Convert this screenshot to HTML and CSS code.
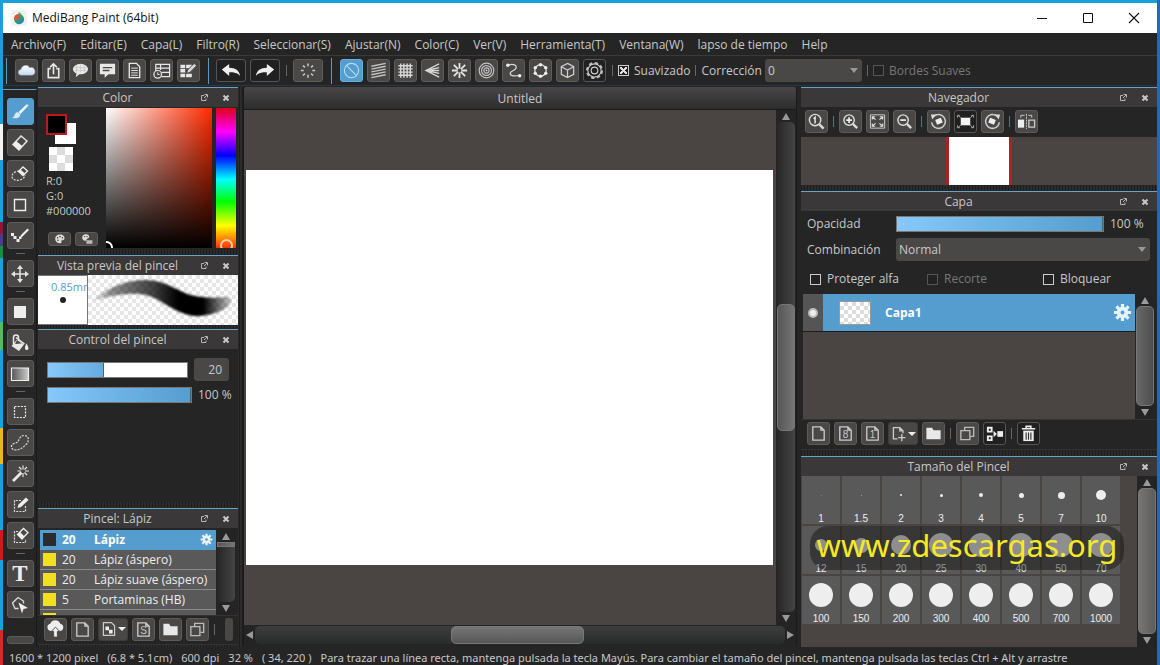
FILE: index.html
```html
<!DOCTYPE html>
<html lang="es">
<head>
<meta charset="utf-8">
<meta name="viewport" content="width=device-width, initial-scale=1">
<title>MediBang Paint (64bit)</title>
<link rel="stylesheet" href="styles.css">
</head>
<body>
<svg class="defs" aria-hidden="true">
  <defs>
    <linearGradient id="grad-grey"><stop offset="0" stop-color="#555"/><stop offset="1" stop-color="#ccc"/></linearGradient>
    <linearGradient id="stroke-grad"><stop offset="0" stop-color="#000" stop-opacity="0.05"/><stop offset="0.15" stop-color="#000" stop-opacity="0.45"/><stop offset="0.45" stop-color="#000" stop-opacity="0.75"/><stop offset="0.62" stop-color="#000" stop-opacity="1"/><stop offset="0.8" stop-color="#000" stop-opacity="1"/><stop offset="1" stop-color="#000" stop-opacity="0.2"/></linearGradient>
    <linearGradient id="cloud-grad" x2="0" y2="1"><stop offset="0" stop-color="#fff"/><stop offset="1" stop-color="#c3d9f2"/></linearGradient>
  </defs>
  <symbol id="float" viewBox="0 0 8 8"><path d="M4 1.500H1.500v5h4.500V4.500M4.500 .5h3v3M7 1 4 4" fill="none" stroke="#b4b4b4"/></symbol>
  <symbol id="close" viewBox="0 0 8 8"><path d="M1.500 1.500l5 5M6.500 1.500l-5 5" stroke="#c8c8c8" stroke-width="2"/></symbol>
  <symbol id="cloud" viewBox="0 0 20 20"><path d="M4.500 15a3 3 0 0 1-.3-6A5 5 0 0 1 13.500 7a4 4 0 0 1 2.500 8z" fill="url(#cloud-grad)" stroke="#7d93ad" stroke-width=".6"/></symbol>
  <symbol id="share" viewBox="0 0 20 20"><path d="M7 8H4.500v9.500h11V8H13M10 14V3.500M6.500 6.500 10 3l3.500 3.500" fill="none" stroke="#e8e8e8" stroke-width="1.700"/></symbol>
  <symbol id="speech" viewBox="0 0 20 20"><ellipse cx="10" cy="8.500" rx="8" ry="5.500" fill="#e8e8e8"/><path d="M6 12l-1 5 5-4z" fill="#e8e8e8"/><path d="M6 5v7M10 4v8M14 5v7M4 7h12M4 10h12" stroke="#bbb" stroke-width=".6"/></symbol>
  <symbol id="comment" viewBox="0 0 20 20"><path d="M2 3h16v11h-7l-4 3.500V14H2z" fill="#e8e8e8"/><path d="M5 7h10M5 10h7" stroke="#4a4747" stroke-width="1.400"/></symbol>
  <symbol id="page" viewBox="0 0 20 20"><path d="M4.500 2.500h7.500l3.500 3.500v11.500h-11z" fill="none" stroke="#e8e8e8" stroke-width="1.400"/><path d="M6.500 7.500h7M6.500 10h7M6.500 12.500h7M6.500 15h7" stroke="#e8e8e8"/></symbol>
  <symbol id="tableclock" viewBox="0 0 20 20"><path d="M4 11V3.500h14.500v13H10M4 7.500h14.500M10 12h8.500M9 3.500v6" fill="none" stroke="#e8e8e8" stroke-width="1.300"/><circle cx="6" cy="14" r="4" fill="#4a4747" stroke="#e8e8e8" stroke-width="1.300"/><path d="M6 12v2.200h2" fill="none" stroke="#e8e8e8"/></symbol>
  <symbol id="gridpen" viewBox="0 0 20 20"><path d="M1.500 4h5v3.500h-5zM7.500 4h6v3.500h-6zM1.500 8.500h5V12h-5zM1.500 13.500h5V17h-5zM7.500 13.500h6V17h-6z" fill="#e8e8e8"/><path d="M8 13l1-3.500 7-7 2.500 2.500-7 7z" fill="#d8d8d8" stroke="#4a4747"/></symbol>
  <symbol id="undo" viewBox="0 0 24 20"><path d="M2 9l8-6v4c7 0 11 3 12 9-3-3.500-7-4-12-4v4z" fill="#eee"/></symbol>
  <symbol id="redo" viewBox="0 0 24 20"><path d="M22 9l-8-6v4C7 7 3 10 2 16c3-3.500 7-4 12-4v4z" fill="#eee"/></symbol>
  <symbol id="spinner" viewBox="0 0 20 20"><g stroke="#c8c8c8" stroke-width="1.600"><path d="M10 2.500v3M10 14.500v3M2.500 10h3M14.500 10h3M4.700 4.700l2 2M13.300 13.300l2 2M15.300 4.700l-2 2M6.700 13.300l-2 2"/></g></symbol>
  <symbol id="none" viewBox="0 0 20 20"><circle cx="10" cy="10" r="7.500" fill="none" stroke="#b5dcf7" stroke-width="1.200"/><path d="M4.700 4.700l10.600 10.600" stroke="#b5dcf7" stroke-width="1.200"/></symbol>
  <symbol id="lines" viewBox="0 0 20 20"><path d="M2.500 5.500l15-3M2.500 8.500l15-3M2.500 11.500l15-3M2.500 14.500l15-3M2.500 17.500l15-3" stroke="#c4c4c4" stroke-width="1.500"/></symbol>
  <symbol id="grid" viewBox="0 0 20 20"><path d="M5 2.500v15M8.300 2.500v15M11.700 2.500v15M15 2.500v15M2.500 5h15M2.500 8.300h15M2.500 11.700h15M2.500 15h15" stroke="#d8d8d8" stroke-width="1.500"/></symbol>
  <symbol id="vanish" viewBox="0 0 20 20"><path d="M17 3 3 10l14 7M17 7 3 10l14 3M3 10h14" fill="none" stroke="#d4d4d4" stroke-width="1.400"/></symbol>
  <symbol id="radial" viewBox="0 0 20 20"><path d="M10 2v6M10 12v6M2 10h6M12 10h6M4 4l4.500 4.500M11.500 11.500 16 16M16 4l-4.500 4.500M8.500 11.500 4 16" stroke="#e4e4e4" stroke-width="1.900"/></symbol>
  <symbol id="rings" viewBox="0 0 20 20"><g fill="none" stroke="#c4c4c4" stroke-width="1.200"><circle cx="10" cy="10" r="7.700"/><circle cx="10" cy="10" r="5.200"/><circle cx="10" cy="10" r="2.700"/></g><circle cx="10" cy="10" r="1" fill="#ccc"/></symbol>
  <symbol id="curve" viewBox="0 0 20 20"><path d="M4 4.500c5-2 11-.5 8 4-2 2.500-6 2-5.500 5 .5 2.500 6 2.500 10 1.500" fill="none" stroke="#d8d8d8" stroke-width="1.300"/><circle cx="4" cy="4.500" r="1.800" fill="#eee"/><circle cx="16.500" cy="15.500" r="1.800" fill="#eee"/></symbol>
  <symbol id="ringdots" viewBox="0 0 20 20"><circle cx="10" cy="10" r="6" fill="none" stroke="#d8d8d8" stroke-width="1.500"/><g fill="#eee"><circle cx="10" cy="4" r="1.800"/><circle cx="10" cy="16" r="1.800"/><circle cx="4.500" cy="7" r="1.800"/><circle cx="15.500" cy="7" r="1.800"/><circle cx="4.500" cy="13" r="1.800"/><circle cx="15.500" cy="13" r="1.800"/></g></symbol>
  <symbol id="cube" viewBox="0 0 20 20"><path d="M10 2.500l6.500 3.500v8L10 17.500 3.500 14V6zM3.500 6l6.500 3.500L16.500 6M10 9.500v8" fill="none" stroke="#d0d0d0" stroke-width="1.300"/></symbol>
  <symbol id="gearline" viewBox="0 0 20 20"><circle cx="10" cy="10" r="8" fill="none" stroke="#bbb" stroke-width="2" stroke-dasharray="3.600 2.680"/><circle cx="10" cy="10" r="7" fill="#202020" stroke="#ccc" stroke-width="1.200"/><circle cx="10" cy="10" r="3.500" fill="none" stroke="#ccc" stroke-width="1.200"/></symbol>
  <symbol id="gear" viewBox="0 0 20 20"><path d="M10 1v18M1 10h18M3.600 3.600l12.800 12.800M16.400 3.600 3.600 16.400" stroke="#e4f3fd" stroke-width="3.400"/><circle cx="10" cy="10" r="6" fill="#e4f3fd"/><circle cx="10" cy="10" r="2" fill="#559ccf"/></symbol>
  <symbol id="brush" viewBox="0 0 20 20"><path d="M9 10l8-7.500 1 1-7.500 8z" fill="#f4f8fb" stroke="#f4f8fb" stroke-width=".8"/><path d="M8.500 10.500l2 2C10 16 6 17 2 16c2-1 2-2 3-4 .7-1.300 2-2 3.500-1.500z" fill="#d5e9f7"/></symbol>
  <symbol id="eraser" viewBox="0 0 20 20"><path d="M3 11.500 11 3l6 5-8 9z" fill="none" stroke="#e6e6e6" stroke-width="1.500"/><path d="M3 11.500l3.200-3.500 6 5L9 17z" fill="#eee"/></symbol>
  <symbol id="erasersel" viewBox="0 0 20 20"><path d="M9 7C5 7 1.500 10 2 13c.5 3 5 4 8 3s5-3 5-5" fill="none" stroke="#ddd" stroke-width="1.200" stroke-dasharray="2 1.300"/><path d="M8.500 7.500 13 3l4.500 4-4.500 4.500z" fill="none" stroke="#eee" stroke-width="1.300"/><path d="M8.500 7.500l2-2 4.500 4-2 2z" fill="#eee"/></symbol>
  <symbol id="square" viewBox="0 0 20 20"><path d="M4.500 4.500h11v11h-11z" fill="none" stroke="#eee" stroke-width="1.400"/></symbol>
  <symbol id="dotpen" viewBox="0 0 20 20"><path d="M10 12l1-3 6.500-6.500 1.500 1.500-6.500 6.500z" fill="#eee"/><path d="M1 7h3v3H1zM3.500 10h3v3h-3zM6.500 13h3v3h-3zM9 10.500h2.500V13H9z" fill="#eee"/></symbol>
  <symbol id="move" viewBox="0 0 20 20"><path d="M10 3v14M3 10h14" stroke="#e4e4e4" stroke-width="1.500"/><path d="M10 1l3 4H7zM10 19l3-4H7zM1 10l4-3v6zM19 10l-4-3v6z" fill="#e4e4e4"/></symbol>
  <symbol id="fill" viewBox="0 0 20 20"><path d="M4 4h12v12H4z" fill="#eee"/></symbol>
  <symbol id="bucket" viewBox="0 0 20 20"><path d="M7 6.500l7 5-5 6.500-7.500-5z" fill="#e8e8e8"/><path d="M3.500 11V4.500a2.500 2.500 0 0 1 5 0V10M6 4.500l8.500 6.500" fill="none" stroke="#e8e8e8" stroke-width="1.500"/><path d="M7 7l4.500 3.500L5 11z" fill="#4a4747"/><path d="M16.500 10.500c3 5 2 6.500 0 6.500s-2-3 0-6.500z" fill="#eee"/></symbol>
  <symbol id="gradient" viewBox="0 0 20 20"><path d="M1.500 4h17v12.500h-17z" fill="url(#grad-grey)" stroke="#eee" stroke-width="1.200"/></symbol>
  <symbol id="select" viewBox="0 0 20 20"><path d="M4.500 4.500h11v11h-11z" fill="none" stroke="#eee" stroke-width="1.200" stroke-dasharray="2 1.200"/></symbol>
  <symbol id="lasso" viewBox="0 0 20 20"><path d="M1.500 14c-.5-4 4-3 6-5s2-6.500 6.500-6.500c5 0 5.500 5.500 2.500 8.500s-6 6-11 6c-2 0-3.700-1-4-3z" fill="none" stroke="#ddd" stroke-width="1.200" stroke-dasharray="2 1.200"/></symbol>
  <symbol id="wand" viewBox="0 0 20 20"><path d="M3 17l8.500-8.500" stroke="#e8e8e8" stroke-width="2.800"/><path d="M13 1.500v4M13 9v4M7.500 7h3.500M15 7h4M9 3l2.500 2.500M17 3l-2.500 2.500M17 11l-2.500-2.500" stroke="#e8e8e8" stroke-width="1.200"/></symbol>
  <symbol id="selpen" viewBox="0 0 20 20"><path d="M11 5.500H4.500v11h11V10" fill="none" stroke="#ddd" stroke-width="1.200" stroke-dasharray="2 1.200"/><path d="M7.500 13l1-3.500 7.500-7 2.500 2.500-7.500 7z" fill="#eee"/></symbol>
  <symbol id="seleraser" viewBox="0 0 20 20"><path d="M8 5.500H4.500v11h11V13" fill="none" stroke="#ddd" stroke-width="1.200" stroke-dasharray="2 1.200"/><path d="M7.500 8.500l6-6L18 6.500l-6 6.500z" fill="#4a4747" stroke="#eee" stroke-width="1.300"/><path d="M7.500 8.500l2.500-2.500 4.500 4.500L12 13z" fill="#eee"/></symbol>
  <symbol id="objsel" viewBox="0 0 20 20"><path d="M8.500 13.500H5L2.500 8 8 2.500 13.500 6v2.500" fill="none" stroke="#ddd" stroke-width="1.300"/><path d="M8.500 7.500l9.500 5.500-4.500 1-1.500 4.500z" fill="#eee"/></symbol>
  <symbol id="palette" viewBox="0 0 20 20"><path d="M10 2.500c5 0 8 3 7.500 6.500-.5 3-3 3-4.500 3-1 0-.5 1.500-.5 3s-1 2-2.500 2C5 17 2 13.500 2 9.500s3-7 8-7z" fill="#ddd"/><g fill="#444"><circle cx="6" cy="8" r="1.300"/><circle cx="10" cy="6" r="1.300"/><circle cx="14" cy="8" r="1.300"/><circle cx="6.500" cy="12" r="1.300"/></g></symbol>
  <symbol id="palettes" viewBox="0 0 20 20"><path d="M8 2c4 0 6 2 5.500 5-.5 2-3 2-4 3 0 2-1 3-2 3-4 0-5.500-3-5.500-5.500S4 2 8 2z" fill="#ddd"/><path d="M9 12h10v6H9z" fill="#bbb"/><circle cx="6" cy="6" r="1.200" fill="#444"/><circle cx="10" cy="6" r="1.200" fill="#444"/></symbol>
  <symbol id="zoom1" viewBox="0 0 20 20"><circle cx="8.500" cy="8.500" r="6" fill="none" stroke="#ddd" stroke-width="1.500"/><path d="M13 13l4.500 4.500" stroke="#ddd" stroke-width="2.500"/><path d="M7 7l1.500-1.500v6.500" fill="none" stroke="#eee" stroke-width="1.500"/></symbol>
  <symbol id="zoomin" viewBox="0 0 20 20"><circle cx="8.500" cy="8.500" r="5.500" fill="none" stroke="#ddd" stroke-width="1.500"/><path d="M12.500 12.500l4.500 4.500" stroke="#ddd" stroke-width="2.500"/><path d="M5.500 8.500h6M8.500 5.500v6" stroke="#eee" stroke-width="1.800"/></symbol>
  <symbol id="zoomout" viewBox="0 0 20 20"><circle cx="8.500" cy="8.500" r="5.500" fill="none" stroke="#ddd" stroke-width="1.500"/><path d="M12.500 12.500l4.500 4.500" stroke="#ddd" stroke-width="2.500"/><path d="M5.500 8.500h6" stroke="#eee" stroke-width="1.800"/></symbol>
  <symbol id="fit" viewBox="0 0 20 20"><path d="M2.500 3h15v14h-15z" fill="none" stroke="#ccc"/><path d="M4.500 8V5h3M12.500 5h3v3M15.500 12v3h-3M7.500 15h-3v-3M5 5.500l3 2.500M15 5.500 12 8M15 14.500 12 12M5 14.500 8 12" fill="none" stroke="#ddd" stroke-width="1.200"/></symbol>
  <symbol id="rotl" viewBox="0 0 20 20"><path d="M5 4.500A7.300 7.300 0 1 1 2.700 11" fill="none" stroke="#ccc" stroke-width="1.600"/><path d="M2 2.500h5.500L3.500 8z" fill="#ddd"/><path d="M6.500 8.500l6-2.500 2 5-6 2.500z" fill="#eee"/></symbol>
  <symbol id="rotr" viewBox="0 0 20 20"><path d="M15 4.500A7.300 7.300 0 1 0 17.300 11" fill="none" stroke="#ccc" stroke-width="1.600"/><path d="M18 2.500h-5.500l4 5.500z" fill="#ddd"/><path d="M13.500 8.500l-6-2.500-2 5 6 2.500z" fill="#eee"/></symbol>
  <symbol id="reset" viewBox="0 0 20 20"><path d="M5 6h10v8H5z" fill="#f4f4f4"/><path d="M2 3.500l3 2.500M18 3.500l-3 2.500M2 16.500l3-2.500M18 16.500l-3-2.500M1.500 6V3.500H4M18.500 6V3.500H16M1.500 14v2.500H4M18.500 14v2.500H16" fill="none" stroke="#aaa"/></symbol>
  <symbol id="flip" viewBox="0 0 20 20"><path d="M1 8h6.500v8.500H1z" fill="#eee"/><path d="M12.500 8.500h6v7.500h-6z" fill="none" stroke="#ccc" stroke-width="1.400"/><path d="M10 2v16" stroke="#ccc" stroke-dasharray="2 1"/><path d="M4 6V3.500h4M12 3.500h3.500V6" fill="none" stroke="#ccc"/></symbol>
  <symbol id="new" viewBox="0 0 20 20"><path d="M4 3h8.500l3.500 3.500V17H4zM12.500 3v3.500H16" fill="none" stroke="#ccc" stroke-width="1.400"/></symbol>
  <symbol id="newplus" viewBox="0 0 20 20"><path d="M8 16H3V2h8l4 4v3M11 2v4h4M13.500 10v9M9 14.500h9" fill="none" stroke="#ccc" stroke-width="1.600"/></symbol>
  <symbol id="newchk" viewBox="0 0 20 20"><path d="M3 2h10l4 4v12H3z" fill="none" stroke="#ccc" stroke-width="1.500"/><path d="M5.500 7h4.500v4h4.500v4.500H10v-4H5.500z" fill="#eee"/></symbol>
  <symbol id="folder" viewBox="0 0 20 20"><path d="M2.500 4h6l1.500 2.500h7.500V16h-15z" fill="#e8e8e8"/></symbol>
  <symbol id="copy" viewBox="0 0 20 20"><path d="M3 7h9.500v9.500H3z" fill="none" stroke="#bbb" stroke-width="1.400"/><path d="M7 7V3.500h9.500V13H13" fill="none" stroke="#bbb" stroke-width="1.400"/></symbol>
  <symbol id="merge" viewBox="0 0 20 20"><path d="M2 3h6v6H2zM2 12h6v6H2z" fill="#eee"/><path d="M4 5h2v2H4zM4 14h2v2H4z" fill="#222"/><path d="M9 7v7l3.500-3.500z" fill="#eee"/><path d="M13 7.500h6v6h-6z" fill="#eee"/></symbol>
  <symbol id="trash" viewBox="0 0 20 20"><path d="M3 5h14M7.500 4.500v-2h5v2" fill="none" stroke="#eee" stroke-width="1.600"/><path d="M4.500 7h11v11h-11z" fill="#eee"/><path d="M7.500 9v7.500M10 9v7.500M12.500 9v7.500" stroke="#333" stroke-width="1.200"/></symbol>
  <symbol id="upload" viewBox="0 0 20 20"><path d="M5 11.500a3.800 3.800 0 0 1-.5-7.500 5.500 5.500 0 0 1 10.500 0 3.800 3.800 0 0 1 0 7.500z" fill="#eee"/><path d="M10 7.500l4.500 4.500H12V18H8v-6H5.500z" fill="#eee" stroke="#4a4747"/></symbol>
</svg>

<div class="window">
  <header class="titlebar">
    <svg class="logo" viewBox="0 0 16 16" aria-hidden="true"><rect width="16" height="16" rx="2" fill="#f3f1ee"/><circle cx="8" cy="9" r="5" fill="#2fa06c"/><path d="M8 4a5 5 0 0 0-5 6l5-1z" fill="#e2532f"/><path d="M8 9l5-1a5 5 0 0 1-8 5z" fill="#2a8f9f"/><path d="M7 2.500c2 0 3 .5 3.500 2C8.500 5 7.500 4 7 2.500z" fill="#48b878"/></svg>
    <h1 class="apptitle">MediBang Paint (64bit)</h1>
    <div class="winbuttons">
      <button aria-label="Minimizar"><svg viewBox="0 0 12 12"><path d="M1 6.500h10" stroke="#111"/></svg></button>
      <button aria-label="Maximizar"><svg viewBox="0 0 12 12"><path d="M1.500 1.500h9v9h-9z" fill="none" stroke="#111"/></svg></button>
      <button aria-label="Cerrar"><svg viewBox="0 0 12 12"><path d="M1 1l10 10M11 1 1 11" stroke="#111" stroke-width="1.100"/></svg></button>
    </div>
  </header>

  <div class="shell">
  <nav class="menubar">
    <button>Archivo(F)</button><button>Editar(E)</button><button>Capa(L)</button><button>Filtro(R)</button><button>Seleccionar(S)</button><button>Ajustar(N)</button><button>Color(C)</button><button>Ver(V)</button><button>Herramienta(T)</button><button>Ventana(W)</button><button>lapso de tiempo</button><button>Help</button>
  </nav>

  <div class="toolbar">
    <div class="group first">
      <button class="ib" aria-label="Nube"><svg><use href="#cloud"/></svg></button>
      <button class="ib" aria-label="Compartir"><svg><use href="#share"/></svg></button>
      <button class="ib" aria-label="Globo"><svg><use href="#speech"/></svg></button>
      <button class="ib" aria-label="Comentario"><svg><use href="#comment"/></svg></button>
      <button class="ib" aria-label="Documento"><svg><use href="#page"/></svg></button>
      <button class="ib" aria-label="Historial"><svg><use href="#tableclock"/></svg></button>
      <button class="ib" aria-label="Editar tabla"><svg><use href="#gridpen"/></svg></button>
    </div>
    <div class="group history">
      <button class="ib wide dark" aria-label="Deshacer"><svg><use href="#undo"/></svg></button>
      <button class="ib wide dark" aria-label="Rehacer"><svg><use href="#redo"/></svg></button>
      <i class="vsep"></i>
      <button class="ib wide" aria-label="Procesar"><svg><use href="#spinner"/></svg></button>
    </div>
    <div class="group snap">
      <button class="ib on" aria-label="Sin ajuste"><svg><use href="#none"/></svg></button>
      <button class="ib" aria-label="Paralelo"><svg><use href="#lines"/></svg></button>
      <button class="ib" aria-label="Cuadrícula"><svg><use href="#grid"/></svg></button>
      <button class="ib" aria-label="Punto de fuga"><svg><use href="#vanish"/></svg></button>
      <button class="ib" aria-label="Radial"><svg><use href="#radial"/></svg></button>
      <button class="ib" aria-label="Círculo"><svg><use href="#rings"/></svg></button>
      <button class="ib" aria-label="Curva"><svg><use href="#curve"/></svg></button>
      <button class="ib" aria-label="Elipse"><svg><use href="#ringdots"/></svg></button>
      <button class="ib" aria-label="Cubo"><svg><use href="#cube"/></svg></button>
      <button class="ib dark" aria-label="Ajustes"><svg><use href="#gearline"/></svg></button>
    </div>
    <div class="options">
      <i class="vsep"></i>
      <label class="check"><input type="checkbox" checked>Suavizado</label>
      <i class="vsep"></i>
      <label for="corr">Corrección</label>
      <span class="select corr"><select id="corr"><option>0</option></select></span>
      <i class="vsep"></i>
      <label class="check off"><input type="checkbox" disabled>Bordes Suaves</label>
    </div>
  </div>

  <main class="workspace">
    <div class="tools">
      <button class="tool on" aria-label="Pincel"><svg><use href="#brush"/></svg></button>
      <button class="tool" aria-label="Borrador"><svg><use href="#eraser"/></svg></button>
      <button class="tool" aria-label="Borrador de lazo"><svg><use href="#erasersel"/></svg></button>
      <button class="tool" aria-label="Figura"><svg><use href="#square"/></svg></button>
      <button class="tool" aria-label="Puntos"><svg><use href="#dotpen"/></svg></button>
      <i class="hsep"></i>
      <button class="tool" aria-label="Mover"><svg><use href="#move"/></svg></button>
      <i class="hsep"></i>
      <button class="tool" aria-label="Rellenar"><svg><use href="#fill"/></svg></button>
      <button class="tool" aria-label="Cubo de pintura"><svg><use href="#bucket"/></svg></button>
      <button class="tool" aria-label="Degradado"><svg><use href="#gradient"/></svg></button>
      <i class="hsep"></i>
      <button class="tool" aria-label="Selección"><svg><use href="#select"/></svg></button>
      <button class="tool" aria-label="Lazo"><svg><use href="#lasso"/></svg></button>
      <button class="tool" aria-label="Varita mágica"><svg><use href="#wand"/></svg></button>
      <button class="tool" aria-label="Pluma de selección"><svg><use href="#selpen"/></svg></button>
      <button class="tool" aria-label="Borrador de selección"><svg><use href="#seleraser"/></svg></button>
      <i class="hsep"></i>
      <button class="tool letter" aria-label="Texto">T</button>
      <button class="tool" aria-label="Operación"><svg><use href="#objsel"/></svg></button>
      <button class="tool stub" aria-label="Más herramientas"></button>
    </div>

    <aside class="docks left">
      <section class="panel">
        <header><h2>Color</h2><button aria-label="Flotar"><svg><use href="#float"/></svg></button><button aria-label="Cerrar panel"><svg><use href="#close"/></svg></button></header>
        <div class="color">
          <div class="swatches">
            <div class="pair"><span class="bg"></span><span class="fg"></span></div>
            <span class="transparent"></span>
            <p>R:0</p><p>G:0</p><p>#000000</p>
            <div class="palbtns"><button aria-label="Paleta"><svg><use href="#palette"/></svg></button><button aria-label="Paletas"><svg><use href="#palettes"/></svg></button></div>
          </div>
          <div class="field"><i class="pick"></i></div>
          <div class="hue"><i class="pick"></i></div>
        </div>
      </section>
      <section class="panel preview">
        <header><h2>Vista previa del pincel</h2><button aria-label="Flotar"><svg><use href="#float"/></svg></button><button aria-label="Cerrar panel"><svg><use href="#close"/></svg></button></header>
        <div class="brushview">
          <div class="size"><span>0.85mm</span><i></i></div>
          <div class="stroke"><svg viewBox="0 0 150 50" preserveAspectRatio="none" aria-hidden="true"><path d="M7 24C22 11 40 5 57 5c22 0 34 13 50 16 16 3 25 1 34 1 4 3 2 8-3 11-10 6-20 8-30 8-20-1-34-17-50-21-18-4-38 2-55 6z" fill="url(#stroke-grad)"/></svg></div>
        </div>
      </section>
      <section class="panel control">
        <header><h2>Control del pincel</h2><button aria-label="Flotar"><svg><use href="#float"/></svg></button><button aria-label="Cerrar panel"><svg><use href="#close"/></svg></button></header>
        <div class="sliders">
          <div class="row"><input class="size-range" type="range" aria-label="Tamaño" value="40"><input class="num" type="text" aria-label="Valor de tamaño" value="20"></div>
          <div class="row"><input class="full" type="range" aria-label="Opacidad del pincel" value="100"><output>100 %</output></div>
        </div>
      </section>
      <section class="panel brushes">
        <header><h2>Pincel: Lápiz</h2><button aria-label="Flotar"><svg><use href="#float"/></svg></button><button aria-label="Cerrar panel"><svg><use href="#close"/></svg></button></header>
        <div class="listwrap">
          <ul>
            <li class="sel"><i></i><b>20</b><span>Lápiz</span><svg><use href="#gear"/></svg></li>
            <li><i></i><b>20</b><span>Lápiz (áspero)</span></li>
            <li><i></i><b>20</b><span>Lápiz suave (áspero)</span></li>
            <li><i></i><b>5</b><span>Portaminas (HB)</span></li>
            <li><i></i></li>
          </ul>
          <div class="scroll"><i class="up"></i><div class="track"><span></span></div><i class="down"></i></div>
        </div>
        <div class="buttons">
          <button class="ib" aria-label="Subir"><svg><use href="#upload"/></svg></button>
          <button class="ib" aria-label="Nuevo pincel"><svg><use href="#new"/></svg></button>
          <button class="ib wide drop" aria-label="Nuevo pincel de mapa"><svg><use href="#newchk"/></svg></button>
          <button class="ib sheet" aria-label="Script"><svg><use href="#new"/></svg><span>S</span></button>
          <button class="ib" aria-label="Carpeta"><svg><use href="#folder"/></svg></button>
          <button class="ib" aria-label="Duplicar"><svg><use href="#copy"/></svg></button>
          <i class="vsep"></i>
          <button class="more" aria-label="Más"></button>
        </div>
      </section>
    </aside>

    <section class="document">
      <h2 class="doctitle">Untitled</h2>
      <div class="view">
        <div class="stage"><div class="artboard"></div></div>
        <div class="scroll"><i class="up"></i><div class="track"><span></span></div><i class="down"></i></div>
        <div class="scroll horizontal"><i class="prev"></i><div class="track"><span></span></div><i class="next"></i></div>
      </div>
    </section>

    <aside class="docks right">
      <section class="panel">
        <header><h2>Navegador</h2><button aria-label="Flotar"><svg><use href="#float"/></svg></button><button aria-label="Cerrar panel"><svg><use href="#close"/></svg></button></header>
        <div class="buttons nav">
          <button class="ib" aria-label="Tamaño real"><svg><use href="#zoom1"/></svg></button>
          <i class="vsep blue"></i>
          <button class="ib" aria-label="Acercar"><svg><use href="#zoomin"/></svg></button>
          <button class="ib" aria-label="Ajustar a ventana"><svg><use href="#fit"/></svg></button>
          <button class="ib" aria-label="Alejar"><svg><use href="#zoomout"/></svg></button>
          <i class="vsep blue"></i>
          <button class="ib" aria-label="Girar a la izquierda"><svg><use href="#rotl"/></svg></button>
          <button class="ib dark" aria-label="Restablecer"><svg><use href="#reset"/></svg></button>
          <button class="ib" aria-label="Girar a la derecha"><svg><use href="#rotr"/></svg></button>
          <i class="vsep blue"></i>
          <button class="ib" aria-label="Voltear"><svg><use href="#flip"/></svg></button>
        </div>
        <div class="navview"><div></div></div>
      </section>
      <section class="panel layers">
        <header><h2>Capa</h2><button aria-label="Flotar"><svg><use href="#float"/></svg></button><button aria-label="Cerrar panel"><svg><use href="#close"/></svg></button></header>
        <div class="props">
          <label for="opacity">Opacidad</label>
          <div class="oprow"><input class="full" id="opacity" type="range" value="100"><output>100 %</output></div>
          <label for="blend">Combinación</label>
          <span class="select"><select id="blend"><option>Normal</option></select></span>
        </div>
        <div class="checks">
          <label class="check"><input type="checkbox">Proteger alfa</label>
          <label class="check off"><input type="checkbox" disabled>Recorte</label>
          <label class="check"><input type="checkbox">Bloquear</label>
        </div>
        <div class="layerlist">
          <div class="stack"><div class="layer"><button class="eye" aria-label="Visible"><i></i></button><span class="thumb"></span><strong>Capa1</strong><svg><use href="#gear"/></svg></div></div>
          <div class="scroll"><i class="up"></i><div class="track"><span></span></div><i class="down"></i></div>
        </div>
        <div class="buttons">
          <button class="ib" aria-label="Nueva capa"><svg><use href="#new"/></svg></button>
          <button class="ib sheet" aria-label="Capa de 8 bits"><svg><use href="#new"/></svg><span>8</span></button>
          <button class="ib sheet" aria-label="Capa de 1 bit"><svg><use href="#new"/></svg><span>1</span></button>
          <button class="ib wide drop" aria-label="Añadir capa"><svg><use href="#newplus"/></svg></button>
          <button class="ib" aria-label="Carpeta"><svg><use href="#folder"/></svg></button>
          <i class="vsep"></i>
          <button class="ib" aria-label="Duplicar capa"><svg><use href="#copy"/></svg></button>
          <button class="ib dark" aria-label="Combinar"><svg><use href="#merge"/></svg></button>
          <i class="vsep"></i>
          <button class="ib dark" aria-label="Eliminar"><svg><use href="#trash"/></svg></button>
        </div>
      </section>
      <section class="panel sizes">
        <header><h2>Tamaño del Pincel</h2><button aria-label="Flotar"><svg><use href="#float"/></svg></button><button aria-label="Cerrar panel"><svg><use href="#close"/></svg></button></header>
        <div class="sizewrap">
          <div class="sizegrid">
            <button><i style="width:1px;opacity:.3"></i>1</button><button><i style="width:1px;opacity:.6"></i>1.5</button><button><i style="width:2px"></i>2</button><button><i style="width:3px"></i>3</button><button><i style="width:4px"></i>4</button><button><i style="width:5px"></i>5</button><button><i style="width:7px"></i>7</button><button><i style="width:10px"></i>10</button>
            <button><i style="width:12px"></i>12</button><button><i style="width:15px"></i>15</button><button><i style="width:20px"></i>20</button><button><i></i>25</button><button><i></i>30</button><button><i></i>40</button><button><i></i>50</button><button><i></i>70</button>
            <button><i></i>100</button><button><i></i>150</button><button><i></i>200</button><button><i></i>300</button><button><i></i>400</button><button><i></i>500</button><button><i></i>700</button><button><i></i>1000</button>
          </div>
          <div class="scroll"><i class="up"></i><div class="track"><span></span></div><i class="down"></i></div>
          <div class="watermark">www.zdescargas.org</div>
        </div>
      </section>
    </aside>
  </main>

  <footer class="status"><span>1600 * 1200 pixel</span><span>(6.8 * 5.1cm)</span><span>600 dpi</span><span>32 %</span><span>( 34, 220 )</span><span>Para trazar una línea recta, mantenga pulsada la tecla Mayús. Para cambiar el tamaño del pincel, mantenga pulsada las teclas Ctrl + Alt y arrastre</span></footer>
  </div>
</div>
</body>
</html>
```
FILE: styles.css
```css
* { box-sizing: border-box; }
body {
  margin: 0;
  font: 12px/16px "Open Sans", "Noto Sans", sans-serif;
  color: #c8c8c8;
  background: linear-gradient(#1a9fdc 0 124px, #f4f4f4 124px 160px, #12a5dc 160px 222px, #8c1838 222px 234px, #4a3a90 234px 246px, #1c8a40 246px 258px, #12a5dc 258px 322px, #5cb860 322px 350px, #12a5dc 350px 428px, #e8b818 428px 464px, #12a5dc 464px 530px, #d01818 530px 560px, #12a5dc 560px 630px, #d82828 630px);
}
.defs { position: absolute; width: 0; height: 0; }
button, input, select { font: inherit; color: inherit; margin: 0; }
button { padding: 0; border: 0; background: none; }
h1, h2, p, ul { margin: 0; padding: 0; font-size: inherit; font-weight: normal; list-style: none; }
i { font-style: normal; }

.window { height: 100vh; display: flex; flex-direction: column; padding: 3px 0 0 3px; overflow: hidden; border-right: 3px solid #1a6cc0; }
.titlebar { display: flex; align-items: center; height: 30px; flex: none; background: #fff; color: #111; padding-left: 8px; gap: 5px; }
.logo { width: 16px; height: 16px; }
.apptitle { flex: 1; }
.winbuttons { display: flex; }
.winbuttons button { width: 46px; height: 30px; display: grid; place-items: center; }
.winbuttons svg { width: 12px; height: 12px; }

.shell { flex: 1; min-height: 0; display: flex; flex-direction: column; background: #252525; }
.menubar { display: flex; gap: 14px; height: 23px; padding: 2px 0 0 8px; border-bottom: 1px solid #3a3a3a; white-space: nowrap; flex: none; }

.toolbar { display: flex; height: 30px; flex: none; align-items: center; white-space: nowrap; border-bottom: 1px solid #24384a; }
.group { display: flex; align-items: center; gap: 4px; height: 26px; border-left: 1px solid #5b9ac4; }
.group.first { margin-left: 3px; padding: 0 8px; }
.group.history { padding: 0 8px 0 7px; }
.group.snap { padding: 0 4px 0 8px; }
.ib { display: inline-flex; align-items: center; justify-content: center; width: 23px; height: 23px; flex: none; background: #4a4747; border: 1px solid #5e5b5b; border-radius: 3px; }
.ib svg { width: 19px; height: 19px; flex: none; }
.ib.wide { width: 30px; }
.ib.wide svg { width: 22px; }
.ib.dark { background: #202020; border-color: #555; }
.ib.on { background: #559ccf; border-color: #6aaede; }
.vsep { width: 1px; height: 11px; background: #666; flex: none; margin: 0 2px; }
.vsep.blue { background: #4b7594; }
.options { display: flex; align-items: center; gap: 3px; }
.check { display: inline-flex; align-items: center; gap: 6px; }
.options .check { gap: 5px; }
.check input { appearance: none; width: 11px; height: 11px; border: 1px solid #ccc; background: #222; flex: none; display: grid; place-items: center; }
.check input:checked::after { content: ""; width: 7px; height: 7px; background: linear-gradient(45deg, transparent 38%, #ddd 38% 62%, transparent 62%), linear-gradient(-45deg, transparent 38%, #ddd 38% 62%, transparent 62%); }
.check.off { color: #777; }
.check.off input { border-color: #555; }
.select { position: relative; display: flex; }
.select select { appearance: none; width: 100%; height: 23px; border: 0; border-radius: 3px; background: #4a4747; padding: 0 3px; }
.select::after { content: ""; position: absolute; right: 4px; top: 9px; border: 4px solid transparent; border-top: 5px solid #999; border-bottom: 0; }
.corr { width: 97px; }

.workspace { flex: 1; min-height: 0; display: flex; padding-top: 1px; }
.tools { width: 34px; flex: none; display: flex; flex-direction: column; align-items: center; gap: 4px; padding: 8px 0 3px 1px; margin-top: 2px; border-top: 1px solid #5b9ac4; border-right: 1px solid #1a1a1a; }
.tool { width: 27px; height: 27px; flex: none; display: grid; place-items: center; background: #4a4747; border: 1px solid #5e5b5b; border-radius: 3px; }
.tool svg { width: 20px; height: 20px; }
.tool.on { background: #559ccf; border-color: #559ccf; }
.tool.letter { font: bold 23px/23px "Liberation Serif", serif; color: #eee; }
.tool.stub { height: 8px; margin-top: auto; }
.hsep { width: 9px; height: 3px; border-top: 1px solid #666; }

.docks { display: flex; flex-direction: column; flex: none; min-height: 0; background: repeating-linear-gradient(90deg, #1d1d1d 0 1px, #2b2b2b 1px 3px); }
.docks.left { width: 205px; margin-left: 1px; padding-right: 5px; }
.docks.right { flex: 0 0 356px; }
.panel { background: #252525; display: flex; flex-direction: column; min-height: 0; margin-bottom: 6px; flex: none; }
.panel > header { height: 20px; flex: none; display: flex; align-items: center; gap: 2px; padding: 0 2px 0 5px; background: #3a3838; border-top: 1px solid #6ba3c7; }
.panel h2 { flex: 1; text-align: center; line-height: 18px; }
.panel header button { width: 20px; height: 18px; display: grid; place-items: center; }
.panel header svg { width: 8px; height: 8px; }

.color { display: flex; height: 142px; padding: 1px 2px 1px 0; gap: 4px; }
.swatches { width: 64px; padding: 6px 0 0 8px; display: flex; flex-direction: column; }
.pair { display: grid; width: 30px; height: 30px; }
.pair span { grid-area: 1 / 1; width: 21px; height: 21px; }
.pair .bg { place-self: end; background: #fff; }
.pair .fg { background: #000; border: 2px solid #c01818; }
.transparent { width: 24px; height: 24px; margin: 3px 0 2px 3px; background: repeating-conic-gradient(#ddd 0 25%, #fff 0 50%) 0 0 / 16px 16px; }
.swatches p { line-height: 15px; font-size: 11px; }
.palbtns { display: flex; gap: 4px; margin: 14px 0 0 2px; }
.palbtns button { width: 23px; height: 14px; flex: none; background: #4a4747; border: 1px solid #5e5b5b; border-radius: 3px; display: grid; place-items: center; }
.palbtns svg { width: 12px; height: 12px; }
.field { flex: 1; overflow: hidden; background: linear-gradient(transparent, #000), linear-gradient(90deg, #fff, #ff2a00); display: flex; align-items: flex-end; }
.field .pick { width: 13px; height: 13px; border: 2px solid #fff; border-radius: 50%; margin: 0 0 -6px -6px; }
.hue { width: 20px; overflow: hidden; background: linear-gradient(#e00018, #f0f 17%, #00f 34%, #0ff 51%, #0f0 67%, #ff0 84%, #ff3000); display: flex; align-items: flex-end; justify-content: center; }
.hue .pick { width: 13px; height: 13px; border: 2px solid #ffd0b0; border-radius: 50%; margin-bottom: -4px; }

.preview { margin-bottom: 4px; }
.brushview { display: flex; height: 50px; }
.size { width: 50px; background: #fff; border: 1px solid #777; border-left: 0; overflow: hidden; padding: 3px 0 0 13px; color: #559ccf; line-height: 16px; font-size: 11px; }
.size i { display: block; width: 6px; height: 6px; border-radius: 50%; background: #222; margin: 2px 0 0 9px; }
.stroke { flex: 1; background: repeating-conic-gradient(#e6e6e6 0 25%, #fff 0 50%) 0 0 / 8px 8px; }
.stroke svg { width: 100%; height: 100%; display: block; filter: blur(1px); }

.panel.control { flex: 1; }
.sliders { display: flex; flex-direction: column; gap: 6px; padding: 9px; }
.row { display: flex; align-items: center; gap: 6px; }
input[type="range"] { appearance: none; flex: 1; min-width: 0; width: 100%; height: 16px; border: 1px solid #777; background: linear-gradient(90deg, #86c8fb, #559ccf); }
input[type="range"]::-webkit-slider-thumb { appearance: none; width: 1px; height: 14px; background: #466; }
input.size-range { background: linear-gradient(90deg, #86c8fb, #64abe0 40%, #fff 40%); }
.num { width: 35px; height: 23px; border: 0; border-radius: 3px; background: #4a4747; text-align: right; padding: 0 7px 0 0; }
output { white-space: nowrap; width: 31px; }

.brushes { margin-bottom: 2px; }
.listwrap { display: flex; height: 87px; padding: 2px 2px 0; }
.listwrap ul { flex: 1; overflow: hidden; background: #595959; color: #eee; }
.listwrap li { display: flex; align-items: center; height: 20px; padding: 0 3px; border-bottom: 1px solid #8a8a8a; white-space: nowrap; }
.listwrap li i { width: 13px; height: 13px; background: #f0e020; flex: none; }
.listwrap li b { width: 32px; margin-left: 6px; font-weight: normal; flex: none; }
.listwrap li span { flex: 1; }
.listwrap li.sel, .listwrap li.sel b { font-weight: bold; color: #fff; }
.listwrap li.sel { background: #559ccf; border-color: #559ccf; }
.listwrap li.sel i { background: #2c2c2c; }
.listwrap li svg { width: 13px; height: 13px; }
.buttons { display: flex; align-items: center; gap: 4px; height: 30px; padding: 0 6px 2px; border: 1px solid #333; border-width: 1px 0; flex: none; }
.buttons .vsep { margin: 0 1px; }
.brushes .buttons { padding-right: 5px; }
.more { width: 8px; height: 23px; border-radius: 3px; background: #4a4747; margin-left: auto; flex: none; }
.drop { gap: 1px; border-color: #3f3c3c; }
.ib.drop svg { width: 16px; height: 16px; }
.drop::after { content: ""; border: 4px solid transparent; border-top: 4px solid #eee; border-bottom: 0; }
.sheet { display: inline-grid; }
.sheet > * { grid-area: 1 / 1; }
.sheet span { font: 10px/12px "Liberation Sans", sans-serif; place-self: center; padding-top: 3px; }

.scroll { width: 20px; flex: none; display: flex; flex-direction: column; align-items: center; background: #242424; }
.scroll > i { width: 0; height: 0; flex: none; border: 4px solid transparent; }
.scroll .up { border-bottom: 7px solid #9a9a9a; border-top: 0; margin: 3px 0 2px; }
.scroll .down { border-top: 7px solid #9a9a9a; border-bottom: 0; margin: 3px 0; }
.track { flex: 1; width: 18px; border-radius: 5px; background: linear-gradient(90deg, #262626, #454545); min-height: 0; display: flex; flex-direction: column; }
.track span { display: block; border-radius: 5px; background: linear-gradient(90deg, #565656, #757575); border: 1px solid #777; }
.listwrap .track span { height: 5px; border-radius: 0; }

.document { flex: 1; min-width: 0; display: flex; flex-direction: column; border: 1px solid #1b1b1b; border-width: 0 1px; margin: 0 4px 2px 0; }
.doctitle { height: 23px; line-height: 24px; text-align: center; background: linear-gradient(#484646, #2e2d2d); border-bottom: 1px solid #1b1b1b; border-radius: 2px 2px 0 0; flex: none; }
.view { flex: 1; min-height: 0; display: grid; grid-template: 1fr 20px / 1fr 20px; }
.stage { background: #4a4543; padding: 0 3px 0 2px; display: flex; align-items: center; min-height: 0; overflow: hidden; }
.artboard { width: 100%; aspect-ratio: 4 / 3; background: #fff; }
.view .track > span { height: 26%; margin-top: 182px; }
.horizontal { grid-column: 1 / 3; width: auto; flex-direction: row; }
.horizontal .track { width: auto; height: 18px; flex-direction: row; background: linear-gradient(#3c3e3e, #2a2c2c); }
.view .horizontal .track > span { width: 25%; height: 18px; margin: 0 0 0 37%; background: linear-gradient(#777, #565656); }
.horizontal .prev { border-right: 7px solid #9a9a9a; border-left: 0; margin: 0 2px; }
.horizontal .next { border-left: 7px solid #9a9a9a; border-right: 0; margin: 0 2px; }

.buttons.nav { border: 0; padding: 0 4px 2px; }
.navview { height: 48px; background: #4a4543; display: flex; justify-content: center; }
.navview div { width: 66px; background: #fff; border: 3px solid #a52424; border-width: 0 3px; }
.props { display: grid; grid-template-columns: 83px 1fr; gap: 3px 6px; align-items: center; padding: 1px 7px 0 6px; }
.props .select { min-width: 0; }
.oprow { display: flex; gap: 6px; align-items: center; height: 23px; padding-right: 9px; }
.checks { display: grid; grid-template-columns: 117px 116px 1fr; padding: 10px 9px 7px; }
.layerlist { display: flex; height: 125px; padding: 0 2px; }
.stack { flex: 1; background: #4a4543; }
.layer { display: flex; align-items: center; height: 38px; background: #559ccf; color: #fff; border-bottom: 1px solid #1c1c1c; padding-right: 3px; }
.eye { width: 20px; height: 37px; background: #555; display: grid; place-items: center; }
.eye i { width: 10px; height: 10px; border-radius: 50%; background: #eee; border: 2px solid #bbb; }
.thumb { width: 32px; height: 24px; margin: 0 14px 0 16px; border: 1px solid #999; background: repeating-conic-gradient(#ddd 0 25%, #fff 0 50%) 0 0 / 8px 8px; }
.layer strong { flex: 1; }
.layer svg { width: 19px; height: 19px; }
.layerlist .track span { flex: 1; background: linear-gradient(90deg, #686868, #4e4e4e); }
.layers .buttons { height: 31px; }

.panel.sizes { flex: 1; margin-bottom: 0; }
.sizewrap { flex: 1; min-height: 0; display: flex; justify-content: space-between; background: #4a4543; position: relative; }
.sizegrid { display: grid; grid-template-columns: repeat(8, 38px); grid-auto-rows: 48px; gap: 2px; padding-left: 1px; }
.sizegrid button { display: grid; grid-template-rows: 38px 10px; justify-items: center; align-items: center; background: #595959; color: #eee; font: 10px/10px "Liberation Sans", sans-serif; }
.sizegrid i { width: 24px; aspect-ratio: 1; border-radius: 50%; background: #eee; }
.sizes .scroll .track span { flex: 1; background: linear-gradient(90deg, #787674, #5e5c5b); }
.watermark { position: absolute; left: 9px; top: 50px; width: 314px; height: 44px; border-radius: 18px; background: rgba(10, 10, 10, .42); color: #f5e926; font: 31px/38px "Noto Sans", sans-serif; text-align: center; white-space: nowrap; }

.status { display: flex; gap: 9px; height: 18px; font: 11px/22px "Noto Sans", sans-serif; padding-left: 6px; white-space: nowrap; overflow: hidden; flex: none; }
```
